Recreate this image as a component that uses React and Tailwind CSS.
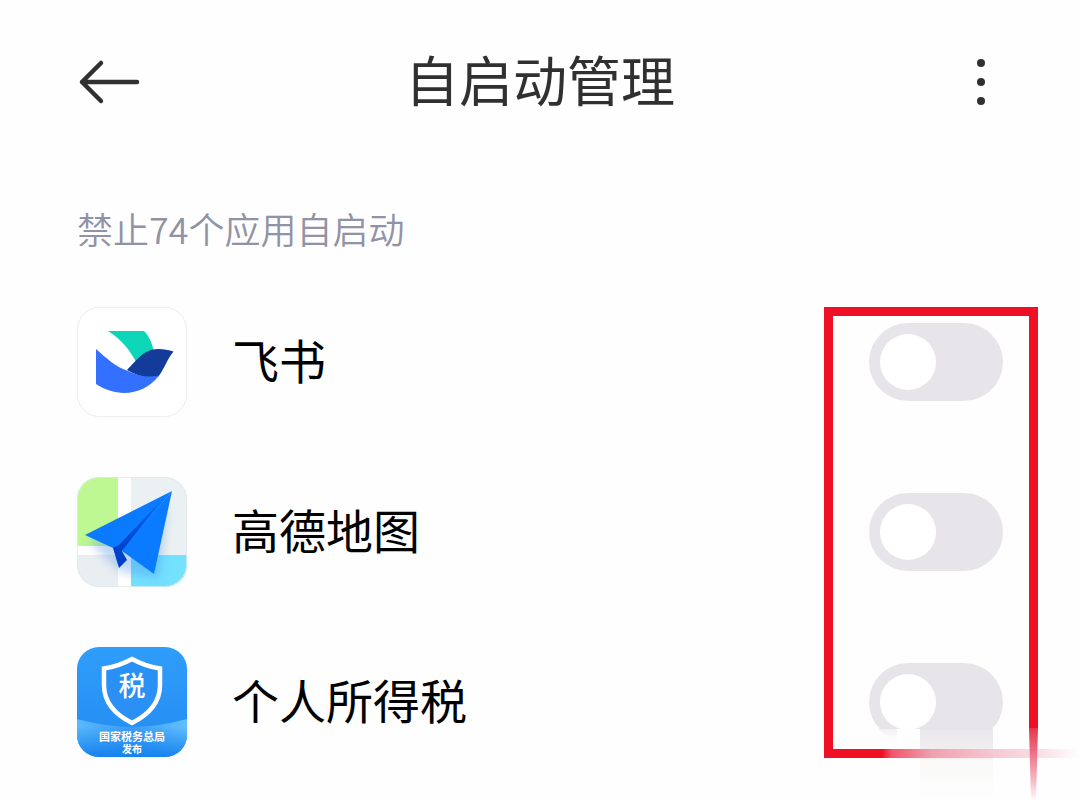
import React from "react";

function FeishuIcon() {
  return (
    <svg viewBox="0 0 110 110" className="size-[110px] shrink-0" aria-hidden="true">
      <rect x="0.5" y="0.5" width="109" height="109" rx="22" fill="#ffffff" stroke="#ececf1" />
      <path d="M31 24H67C72 29 75 36 76.500 43C69 45 64 49 59 55C53 43 44 32 31 24Z" fill="#0dd6b8" />
      <path d="M50 63C60 53 67 42 81 42C87 42 92 43 96.500 44.500C90 52 88 61 81 70C71 74 60 68 50 63Z" fill="#133c9a" />
      <path d="M19 42C29 51 39 60 51 64C61 69 71 71 82 68.500C66 90 38 90 19 77Z" fill="#3370ff" />
    </svg>
  );
}

function AmapIcon() {
  return (
    <svg viewBox="0 0 110 110" className="size-[110px] shrink-0" aria-hidden="true">
      <defs>
        <clipPath id="map-clip">
          <rect width="110" height="110" rx="22" />
        </clipPath>
        <linearGradient id="map-fold" x1="1" y1="0" x2="0" y2="1">
          <stop offset="0" stopColor="#0066ee" />
          <stop offset="1" stopColor="#0038c4" />
        </linearGradient>
        <filter id="map-shadow" x="-30%" y="-30%" width="160%" height="160%">
          <feGaussianBlur stdDeviation="5" />
        </filter>
      </defs>
      <g clipPath="url(#map-clip)">
        <rect width="110" height="110" fill="#ffffff" />
        <rect width="41" height="69" fill="#bdf892" />
        <rect x="54" width="56" height="78" fill="#ebf1f2" />
        <rect y="78" width="41" height="32" fill="#e9eef2" />
        <rect x="54" y="78" width="56" height="32" fill="#74e1ff" />
        <path d="M12 64L90 30L82 102L42 94Z" fill="#4a8fe8" opacity="0.35" filter="url(#map-shadow)" />
      </g>
      <rect x="0.5" y="0.5" width="109" height="109" rx="22" fill="none" stroke="#dfe8e8" strokeOpacity="0.8" />
      <path d="M95 14L8 58L36 71L46 74Z" fill="#0a7bff" />
      <path d="M84 24L42 68L36 71L42 91L50 83L45 74Z" fill="url(#map-fold)" />
      <path d="M95 14L45 74L77 97Z" fill="#0a7bff" />
    </svg>
  );
}

function TaxIcon() {
  return (
    <svg viewBox="0 0 110 110" className="size-[110px] shrink-0" role="img" aria-label="个人所得税">
      <defs>
        <linearGradient id="tax-bg" x1="0" y1="0" x2="0" y2="1">
          <stop offset="0" stopColor="#2f9dfb" />
          <stop offset="1" stopColor="#238bf0" />
        </linearGradient>
        <linearGradient id="tax-fold" x1="0" y1="0" x2="1" y2="0">
          <stop offset="0" stopColor="#5ab8fd" />
          <stop offset="0.5" stopColor="#3c9cf5" />
          <stop offset="1" stopColor="#62c0fd" />
        </linearGradient>
        <linearGradient id="tax-shade" x1="0" y1="0" x2="0" y2="1">
          <stop offset="0.2" stopColor="#1682ee" stopOpacity="0" />
          <stop offset="1" stopColor="#1682ee" />
        </linearGradient>
        <clipPath id="tax-clip">
          <rect width="110" height="110" rx="22" />
        </clipPath>
      </defs>
      <g clipPath="url(#tax-clip)">
        <rect width="110" height="110" fill="url(#tax-bg)" />
        <path d="M0 72Q30 80 55 80Q80 80 110 72V110H0Z" fill="url(#tax-fold)" />
        <path d="M0 72Q30 80 55 80Q80 80 110 72V110H0Z" fill="url(#tax-shade)" />
      </g>
      <path
        d="M55 12C46 17 37 20 27 21.500V38C27 56 39 68 55 76C71 68 83 56 83 38V21.500C73 20 64 17 55 12Z"
        fill="#2b90f5"
        stroke="#ffffff"
        strokeWidth="4.500"
      />
      <g fill="#ffffff" textAnchor="middle" className="font-['Noto_Sans_CJK_SC',sans-serif] font-bold">
        <text x="55" y="49" fontSize="27" className="font-medium">税</text>
        <text x="55" y="94" fontSize="11">国家税务总局</text>
        <text x="55" y="106" fontSize="10">发布</text>
      </g>
    </svg>
  );
}

const apps = [
  { id: "feishu", name: "飞书", Icon: FeishuIcon },
  { id: "amap", name: "高德地图", Icon: AmapIcon },
  { id: "tax", name: "个人所得税", Icon: TaxIcon },
];

function AppRow({ id, name, Icon }) {
  return (
    <li className="flex items-center">
      <Icon />
      <label htmlFor={id} className="ml-[45px] flex-1 pb-1.5 text-[47px] leading-[70px] text-black">
        {name}
      </label>
      <input
        id={id}
        type="checkbox"
        role="switch"
        className="flex h-[78px] w-[134px] shrink-0 cursor-pointer appearance-none items-center rounded-full bg-[#e7e5e9] px-[11px] before:size-14 before:rounded-full before:bg-white before:content-[''] checked:justify-end checked:bg-blue-500"
      />
    </li>
  );
}

function Highlight() {
  return (
    <svg
      viewBox="820 307 260 496"
      className="pointer-events-none absolute top-0 -right-[77px] h-[496px] w-[260px]"
      aria-hidden="true"
    >
      <defs>
        <linearGradient id="smear" x1="0" y1="0" x2="0" y2="1">
          <stop offset="0" stopColor="#e9e7ea" />
          <stop offset="0.4" stopColor="#f3f1f2" />
          <stop offset="0.42" stopColor="#faf9f8" />
          <stop offset="1" stopColor="#fefefe" />
        </linearGradient>
        <linearGradient id="smear-left" x1="0" y1="0" x2="0" y2="1">
          <stop offset="0" stopColor="#f1f0f2" />
          <stop offset="1" stopColor="#ffffff" />
        </linearGradient>
        <linearGradient id="fade-x" gradientUnits="userSpaceOnUse" x1="882" y1="0" x2="1080" y2="0">
          <stop offset="0" stopColor="#ef1026" />
          <stop offset="0.05" stopColor="#f0566a" />
          <stop offset="0.25" stopColor="#f09fae" />
          <stop offset="0.55" stopColor="#f5c6d0" />
          <stop offset="0.8" stopColor="#fadfe4" />
          <stop offset="1" stopColor="#ffffff" />
        </linearGradient>
        <linearGradient id="fade-y" gradientUnits="userSpaceOnUse" x1="0" y1="728" x2="0" y2="801">
          <stop offset="0" stopColor="#e8354d" />
          <stop offset="0.35" stopColor="#ee7389" />
          <stop offset="0.7" stopColor="#f5b5c1" />
          <stop offset="1" stopColor="#ffffff" />
        </linearGradient>
      </defs>
      <rect x="866" y="729" width="214" height="74" fill="#fefefe" />
      <path d="M878 729H897V741H892Z" fill="url(#smear-left)" />
      <rect x="920" y="729" width="73" height="74" fill="url(#smear)" />
      <path d="M824 307H1038V728H1029V316H833V749H882V758H824Z" fill="#ef1026" />
      <rect x="882" y="749" width="198" height="9" fill="url(#fade-x)" />
      <path d="M1029 728H1038L1036 801H1031Z" fill="url(#fade-y)" />
    </svg>
  );
}

export default function App() {
  return (
    <main className="min-h-screen overflow-hidden bg-[#fefefe] px-[77px] pt-[42px] font-['Noto_Sans_CJK_SC',sans-serif]">
      <header className="grid h-20 grid-cols-[1fr_auto_1fr] items-center">
        <button type="button" aria-label="返回" className="justify-self-start">
          <svg viewBox="0 0 66 48" className="h-12 w-[66px]" fill="none" stroke="#303030" strokeWidth="4.500" strokeLinecap="round" strokeLinejoin="round">
            <path d="M60 24H5M24 5L5 24L24 43" />
          </svg>
        </button>
        <h1 className="pb-1.5 text-[54px] leading-[72px] text-[#303030]">自启动管理</h1>
        <button type="button" aria-label="更多" className="justify-self-end">
          <svg viewBox="0 0 44 48" className="h-12 w-11" fill="#303030">
            <circle cx="22" cy="5" r="4" />
            <circle cx="22" cy="24" r="4" />
            <circle cx="22" cy="43" r="4" />
          </svg>
        </button>
      </header>
      <p className="mt-[79px] text-[36px] leading-[54px] font-[350] text-[#9092a6]">禁止74个应用自启动</p>
      <div className="relative mt-[52px]">
        <ul className="flex flex-col gap-[60px]">
          {apps.map((app) => (
            <AppRow key={app.id} {...app} />
          ))}
        </ul>
        <Highlight />
      </div>
    </main>
  );
}
